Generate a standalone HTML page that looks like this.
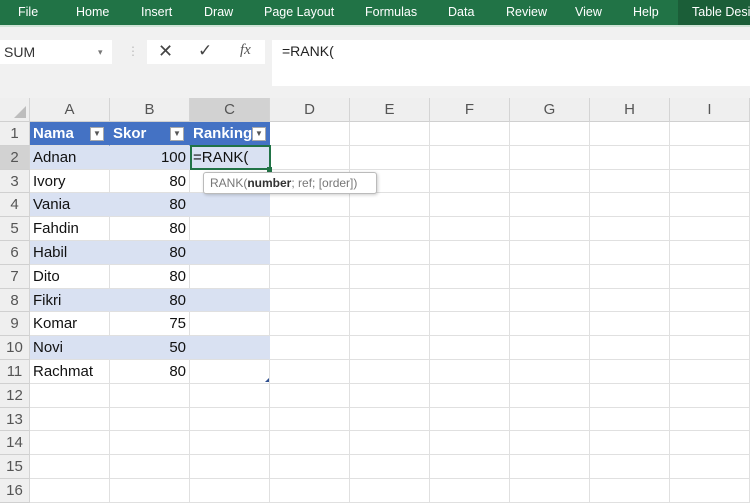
<!DOCTYPE html>
<html><head><style>
*{margin:0;padding:0;box-sizing:border-box}
body{width:750px;height:500px;overflow:hidden;background:#fff;font-family:"Liberation Sans",sans-serif;position:relative}
.rib{position:absolute;left:0;top:0;width:750px;height:27px;background:#217346;border-bottom:2px solid #cfe3d6}
.rib span{position:absolute;top:5px;color:#fff;font-size:12.5px;white-space:nowrap}
.tb{position:absolute;left:0;top:27px;width:750px;height:71px;background:#f1f1f1}
.box{position:absolute;background:#fff}
.grid{position:absolute;left:0;top:98px}
.c{position:absolute;height:23.8px;border-right:1px solid #e0e0e0;border-bottom:1px solid #e0e0e0;font-size:15px;line-height:23px;padding:0 3px;white-space:nowrap;overflow:hidden;color:#111}
.h{background:#efefef;color:#555;text-align:center;border-right:1px solid #d4d4d4;border-bottom:1px solid #d0d0d0}
.blue{background:#4472c4;color:#fff;font-weight:bold;border-right:1px solid #4472c4}
.lb{background:#d9e1f2;border-right-color:#d9e1f2}
.r{text-align:right}
.dd{position:absolute;top:5px;width:14px;height:14px;background:#fff;border:1px solid #aaa;font-size:8px;line-height:12px;text-align:center;color:#555}
</style></head><body>
<div class="rib">
<span style="left:18px">File</span><span style="left:76px">Home</span><span style="left:141px">Insert</span><span style="left:204px">Draw</span><span style="left:264px">Page Layout</span><span style="left:365px">Formulas</span><span style="left:448px">Data</span><span style="left:506px">Review</span><span style="left:575px">View</span><span style="left:633px">Help</span>
<div style="position:absolute;left:678px;top:0;width:72px;height:25px;background:#1b5e38"></div><span style="left:692px">Table Desi</span>
</div>
<div class="tb">
<div class="box" style="left:0;top:13px;width:112px;height:24px;font-size:14px;line-height:24px;padding-left:4px;color:#333">SUM<span style="position:absolute;left:98px;font-size:9px;color:#777">▾</span></div>
<div style="position:absolute;left:127px;top:17px;color:#bbb;font-size:12px">⋮</div>
<div class="box" style="left:147px;top:13px;width:118px;height:24px"></div>
<div style="position:absolute;left:158px;top:14px;font-size:18px;color:#444">✕</div>
<div style="position:absolute;left:198px;top:14px;font-size:17px;color:#444">✓</div>
<div style="position:absolute;left:240px;top:15px;font-size:15px;color:#555;font-style:italic;font-family:'Liberation Serif',serif">fx</div>
<div class="box" style="left:272px;top:13px;width:478px;height:46px;font-size:14px;padding:3px 0 0 10px;color:#222">=RANK(</div>
</div>
<div class="grid">
<div class="c h" style="left:0;top:0;width:30px;height:24px"><div style="position:absolute;right:3px;bottom:3px;width:0;height:0;border-left:12px solid transparent;border-bottom:12px solid #bdbdbd"></div></div>
<div class="c h" style="left:30px;top:0;width:80px;height:24px">A</div>
<div class="c h" style="left:110px;top:0;width:80px;height:24px">B</div>
<div class="c h" style="left:190px;top:0;width:80px;height:24px;background:#d2d2d2">C</div>
<div class="c h" style="left:270px;top:0;width:80px;height:24px">D</div>
<div class="c h" style="left:350px;top:0;width:80px;height:24px">E</div>
<div class="c h" style="left:430px;top:0;width:80px;height:24px">F</div>
<div class="c h" style="left:510px;top:0;width:80px;height:24px">G</div>
<div class="c h" style="left:590px;top:0;width:80px;height:24px">H</div>
<div class="c h" style="left:670px;top:0;width:80px;height:24px">I</div>
</div>
<div id="rows"></div>
<script>
var d=[["Nama","Skor","Ranking"],["Adnan","100","=RANK("],["Ivory","80"],["Vania","80"],["Fahdin","80"],["Habil","80"],["Dito","80"],["Fikri","80"],["Komar","75"],["Novi","50"],["Rachmat","80"]];
var h="";
for(var i=0;i<16;i++){var t=122+i*23.8;
h+='<div class="c h" style="left:0;top:'+t+'px;width:30px;'+(i==1?'background:#d2d2d2;':'')+'">'+(i+1)+'</div>';
for(var j=0;j<9;j++){var l=30+j*80,cls="c",txt="";
if(i<11&&j<3){if(i==0)cls+=" blue";else if(i%2==1)cls+=" lb";
var r=d[i];txt=r[j]||"";if(j==1&&i>0)cls+=" r";}
h+='<div class="'+cls+'" style="left:'+l+'px;top:'+t+'px;width:80px">'+txt+(i==0&&j<3?'<div class="dd" style="left:'+(j==2?62:60)+'px">▼</div>':'')+'</div>';}}
document.getElementById("rows").innerHTML=h;
</script>
<div style="position:absolute;left:190px;top:145px;width:81px;height:25px;border:2px solid #217346"></div>
<div style="position:absolute;left:267px;top:167px;width:5px;height:5px;background:#217346"></div>
<div style="position:absolute;left:203px;top:172px;width:174px;height:22px;background:#fff;border:1px solid #bbb;border-radius:3px;box-shadow:1px 1px 3px rgba(0,0,0,.2);font-size:12px;line-height:20px;padding-left:6px;color:#777">RANK(<b style="color:#333">number</b>; ref; [order])</div>
<div style="position:absolute;left:265px;top:378px;width:0;height:0;border-left:4px solid transparent;border-bottom:4px solid #2f4f8f"></div>
</body></html>
